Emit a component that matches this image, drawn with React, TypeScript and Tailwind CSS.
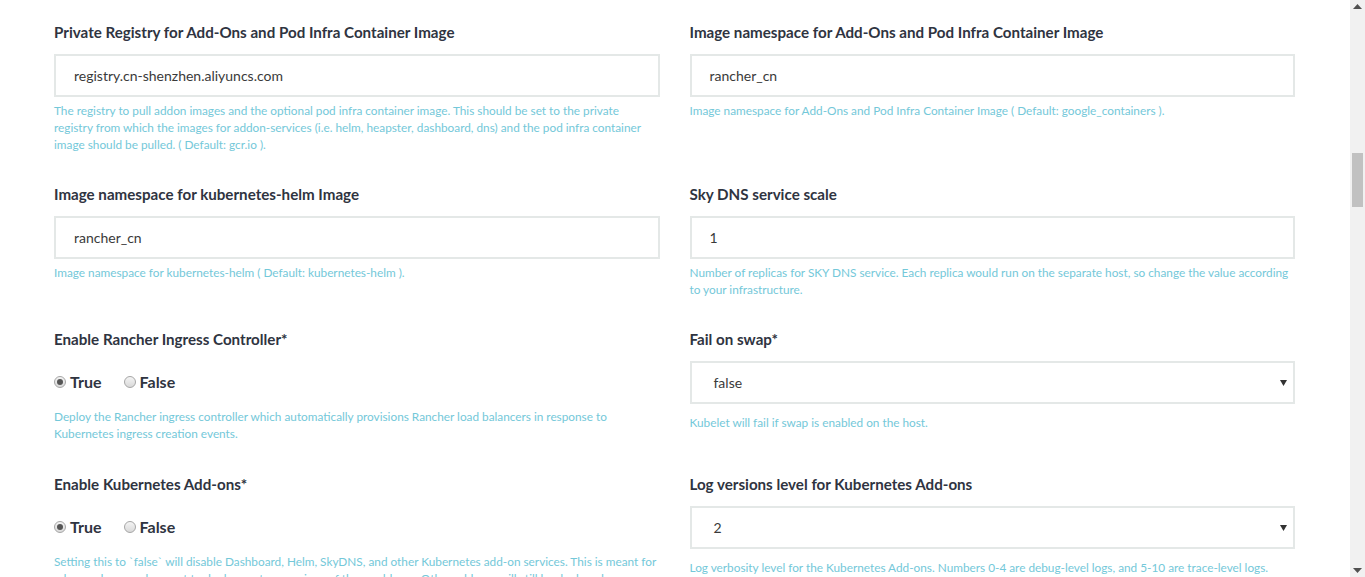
const font = { fontFamily: "Lato, 'Open Sans', sans-serif" };

function Label({ children }: { children: React.ReactNode }) {
  return (
    <div className="text-[15.15px] leading-5 font-bold text-[#2f3441] mb-3">
      {children}
    </div>
  );
}

function Help({ children }: { children: React.ReactNode }) {
  return (
    <p className="text-[11.8px] leading-[17px] text-[#74c8d9]">{children}</p>
  );
}

function TextInput({ value }: { value: string }) {
  return (
    <div className="h-[43px] border-2 border-[#e4e8e7] bg-white flex items-center pl-[18px] text-[14px] text-[#3a3a3a] mb-[5px]">
      {value}
    </div>
  );
}

function Select({ value }: { value: string }) {
  return (
    <div className="h-[43px] border-2 border-[#e4e8e7] bg-white flex items-center justify-between pl-[22px] pr-[6px] text-[14px] text-[#3a3a3a] mb-[10px]">
      <span>{value}</span>
      <svg width="7" height="6" viewBox="0 0 7 6">
        <path d="M0 0 H7 L3.5 6 Z" fill="#333" />
      </svg>
    </div>
  );
}

function Radio({ label, checked }: { label: string; checked?: boolean }) {
  return (
    <div className="flex items-center gap-[4px]">
      <span className="w-[12px] h-[12px] rounded-full border border-[#a6a6a6] bg-gradient-to-b from-[#f4f4f4] to-[#d9d9d9] flex items-center justify-center">
        {checked && <span className="w-[6px] h-[6px] rounded-full bg-[#555]" />}
      </span>
      <span className="text-[16px] font-bold text-[#2f3441]">{label}</span>
    </div>
  );
}

function RadioGroup() {
  return (
    <div className="flex items-center gap-[22px] h-5 mt-[23px] mb-[16px]">
      <Radio label="True" checked />
      <Radio label="False" />
    </div>
  );
}

function Scrollbar() {
  return (
    <div className="w-[15px] h-full bg-[#f1f1f1] flex flex-col items-center shrink-0">
      <svg width="9" height="5" viewBox="0 0 9 5" className="mt-[4px]">
        <path d="M0 5 L4.5 0 L9 5 Z" fill="#505050" />
      </svg>
      <div className="w-[11px] h-[54px] bg-[#c1c1c1] mt-[144px]" />
      <div className="flex-1" />
      <svg width="9" height="5" viewBox="0 0 9 5" className="mb-[4px]">
        <path d="M0 0 L9 0 L4.5 5 Z" fill="#505050" />
      </svg>
    </div>
  );
}

export default function App() {
  return (
    <div className="flex h-[577px] w-full overflow-hidden bg-white" style={font}>
      <div className="flex-1 pt-[22px] pl-[54px] pr-[55px]">
        <div className="grid grid-cols-2 gap-x-[30px] gap-y-[31px]">
          {/* row 1 */}
          <div>
            <Label>Private Registry for Add-Ons and Pod Infra Container Image</Label>
            <TextInput value="registry.cn-shenzhen.aliyuncs.com" />
            <Help>
              The registry to pull addon images and the optional pod infra container image. This should be set to the private
              registry from which the images for addon-services (i.e. helm, heapster, dashboard, dns) and the pod infra container
              image should be pulled. ( Default: gcr.io ).
            </Help>
          </div>
          <div>
            <Label>Image namespace for Add-Ons and Pod Infra Container Image</Label>
            <TextInput value="rancher_cn" />
            <Help>Image namespace for Add-Ons and Pod Infra Container Image ( Default: google_containers ).</Help>
          </div>

          {/* row 2 */}
          <div>
            <Label>Image namespace for kubernetes-helm Image</Label>
            <TextInput value="rancher_cn" />
            <Help>Image namespace for kubernetes-helm ( Default: kubernetes-helm ).</Help>
          </div>
          <div>
            <Label>Sky DNS service scale</Label>
            <TextInput value="1" />
            <Help>
              Number of replicas for SKY DNS service. Each replica would run on the separate host, so change the value according
              to your infrastructure.
            </Help>
          </div>

          {/* row 3 */}
          <div className="pb-px">
            <Label>Enable Rancher Ingress Controller*</Label>
            <RadioGroup />
            <Help>
              Deploy the Rancher ingress controller which automatically provisions Rancher load balancers in response to
              Kubernetes ingress creation events.
            </Help>
          </div>
          <div>
            <Label>Fail on swap*</Label>
            <Select value="false" />
            <Help>Kubelet will fail if swap is enabled on the host.</Help>
          </div>

          {/* row 4 */}
          <div>
            <Label>Enable Kubernetes Add-ons*</Label>
            <RadioGroup />
            <Help>
              Setting this to `false` will disable Dashboard, Helm, SkyDNS, and other Kubernetes add-on services. This is meant for
              advanced users who want to deploy custom versions of these add-ons. Other add-ons will still be deployed.
            </Help>
          </div>
          <div>
            <Label>Log versions level for Kubernetes Add-ons</Label>
            <Select value="2" />
            <Help>Log verbosity level for the Kubernetes Add-ons. Numbers 0-4 are debug-level logs, and 5-10 are trace-level logs.</Help>
          </div>
        </div>
      </div>
      <Scrollbar />
    </div>
  );
}
